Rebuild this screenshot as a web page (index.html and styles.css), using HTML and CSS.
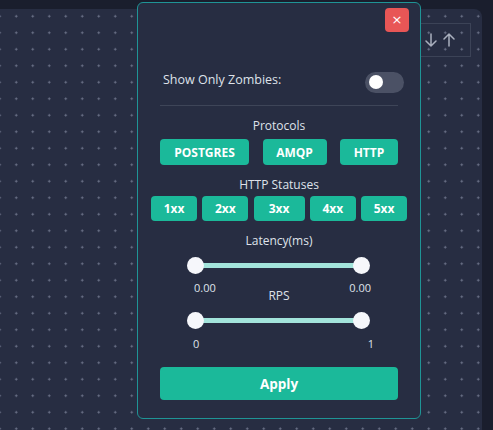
FILE: index.html
```html
<!DOCTYPE html>
<html>
<head>
<meta charset="utf-8">
<link rel="stylesheet" href="styles.css">
</head>
<body>
<div class="app">
  <div class="canvas">
    <div class="sort-box">
      <svg class="arrow" viewBox="0 0 12 14" width="12" height="14"><path d="M6 1V13M1 8L6 13L11 8" fill="none" stroke="#aab0be" stroke-width="1.5" stroke-linecap="round" stroke-linejoin="round"/></svg>
      <svg class="arrow" viewBox="0 0 12 14" width="12" height="14"><path d="M6 13V1M1 6L6 1L11 6" fill="none" stroke="#aab0be" stroke-width="1.5" stroke-linecap="round" stroke-linejoin="round"/></svg>
    </div>
  </div>
  <div class="modal">
    <div class="modal-head">
      <button class="close">×</button>
    </div>
    <div class="zombie-row">
      <span class="zombie-label">Show Only Zombies:</span>
      <div class="toggle"><div class="knob"></div></div>
    </div>
    <div class="divider"></div>
    <div class="section-title">Protocols</div>
    <div class="proto-row">
      <button class="chip proto">POSTGRES</button>
      <button class="chip proto">AMQP</button>
      <button class="chip proto">HTTP</button>
    </div>
    <div class="section-title">HTTP Statuses</div>
    <div class="status-row">
      <button class="chip status">1xx</button>
      <button class="chip status">2xx</button>
      <button class="chip status">3xx</button>
      <button class="chip status">4xx</button>
      <button class="chip status">5xx</button>
    </div>
    <div class="section-title">Latency(ms)</div>
    <div class="slider first">
      <div class="track"></div>
      <div class="thumb left"></div>
      <div class="thumb right"></div>
    </div>
    <div class="slider-labels lat"><span>0.00</span><span>0.00</span></div>
    <div class="section-title rps">RPS</div>
    <div class="slider second">
      <div class="track"></div>
      <div class="thumb left"></div>
      <div class="thumb right"></div>
    </div>
    <div class="slider-labels rpsl"><span>0</span><span>1</span></div>
    <button class="apply">Apply</button>
  </div>
</div>
</body>
</html>
```

FILE: styles.css
```css
html, body {
  margin: 0;
  padding: 0;
}
body {
  background: #1a1e2d;
  font-family: "Open Sans", "Liberation Sans", sans-serif;
  color: #dfe2ea;
  width: 493px;
  height: 430px;
  overflow: hidden;
}
.app {
  position: relative;
  width: 493px;
  height: 430px;
  padding-top: 9px;
  box-sizing: border-box;
}
.canvas {
  position: relative;
  width: 482px;
  height: 421px;
  border-top-right-radius: 8px;
  background-color: #272d42;
  background-image: radial-gradient(circle, #6f768c 0.9px, transparent 1.2px);
  background-size: 16.5px 16.5px;
  background-position: 8px -1px;
}
.sort-box {
  position: absolute;
  left: 420px;
  top: 14px;
  width: 51px;
  height: 34px;
  border: 1px solid #3c4357;
  box-sizing: border-box;
  display: flex;
  align-items: center;
  justify-content: flex-end;
  gap: 6px;
  padding-right: 15px;
}
.arrow {
  display: block;
}
.modal {
  position: absolute;
  left: 137px;
  top: 2px;
  width: 284px;
  height: 417px;
  box-sizing: border-box;
  background: #272d42;
  border: 1.5px solid #1f9496;
  border-radius: 6px;
  padding: 0 22px;
  display: flex;
  flex-direction: column;
}
.modal-head {
  display: flex;
  justify-content: flex-end;
  margin-right: -11px;
  padding-top: 5px;
}
.close {
  width: 24px;
  height: 24px;
  border: none;
  border-radius: 4px;
  background: #e85656;
  color: #fff;
  font-size: 13px;
  line-height: 24px;
  padding: 0;
  font-family: "DejaVu Sans", sans-serif;
}
.zombie-row {
  margin-top: 39px;
  margin-right: -6px;
  display: flex;
  align-items: center;
  justify-content: space-between;
  padding-left: 3px;
  font-size: 12.5px;
  height: 22px;
}
.zombie-label {
  position: relative;
  top: -3px;
}
.toggle {
  width: 39px;
  height: 21px;
  border-radius: 11px;
  background: #4b5165;
  display: flex;
  align-items: center;
  padding-left: 4px;
  box-sizing: border-box;
}
.knob {
  width: 14px;
  height: 14px;
  border-radius: 50%;
  background: #fff;
}
.divider {
  margin-top: 12px;
  height: 1px;
  background: #3e4558;
}
.section-title {
  text-align: center;
  font-size: 12px;
  margin-top: 12px;
  line-height: 16px;
}
.proto-row {
  margin-top: 5px;
  display: flex;
  justify-content: space-between;
}
.chip {
  border: none;
  border-radius: 4px;
  background: #1bb99a;
  color: #fff;
  font-family: "Open Sans", "Liberation Sans", sans-serif;
  font-weight: 700;
  font-size: 12px;
  height: 26px;
  padding: 0;
}
.proto:nth-child(1) { width: 89px; }
.proto:nth-child(2) { width: 64px; }
.proto:nth-child(3) { width: 58px; }
.status-row {
  margin: 3px -9px 0;
  display: flex;
  justify-content: space-between;
}
.status { width: 46px; height: 25px; }
.status-row .status:nth-child(3) { width: 51px; }
.slider {
  position: relative;
  height: 17px;
  margin: 8px 28px 0 27px;
}
.slider.second {
  margin-top: 8px;
}
.track {
  position: absolute;
  left: 8px;
  right: 8px;
  top: 6px;
  height: 5px;
  background: #a3e4db;
}
.thumb {
  position: absolute;
  top: 0;
  width: 17px;
  height: 17px;
  border-radius: 50%;
  background: #f6f7fb;
}
.thumb.left { left: 0; }
.thumb.right { right: 0; }
.slider-labels {
  display: flex;
  justify-content: space-between;
  font-size: 11px;
  line-height: 14px;
}
.slider-labels.lat {
  margin: 7px 27px 0 34px;
}
.section-title.rps {
  margin-top: -7px;
}
.slider-labels.rpsl {
  margin: 8px 24px 0 33px;
}
.apply {
  margin-top: 16px;
  height: 33px;
  border: none;
  border-radius: 4px;
  background: #1bb99a;
  color: #fff;
  font-family: "Open Sans", "Liberation Sans", sans-serif;
  font-weight: 700;
  font-size: 13.5px;
}
```
